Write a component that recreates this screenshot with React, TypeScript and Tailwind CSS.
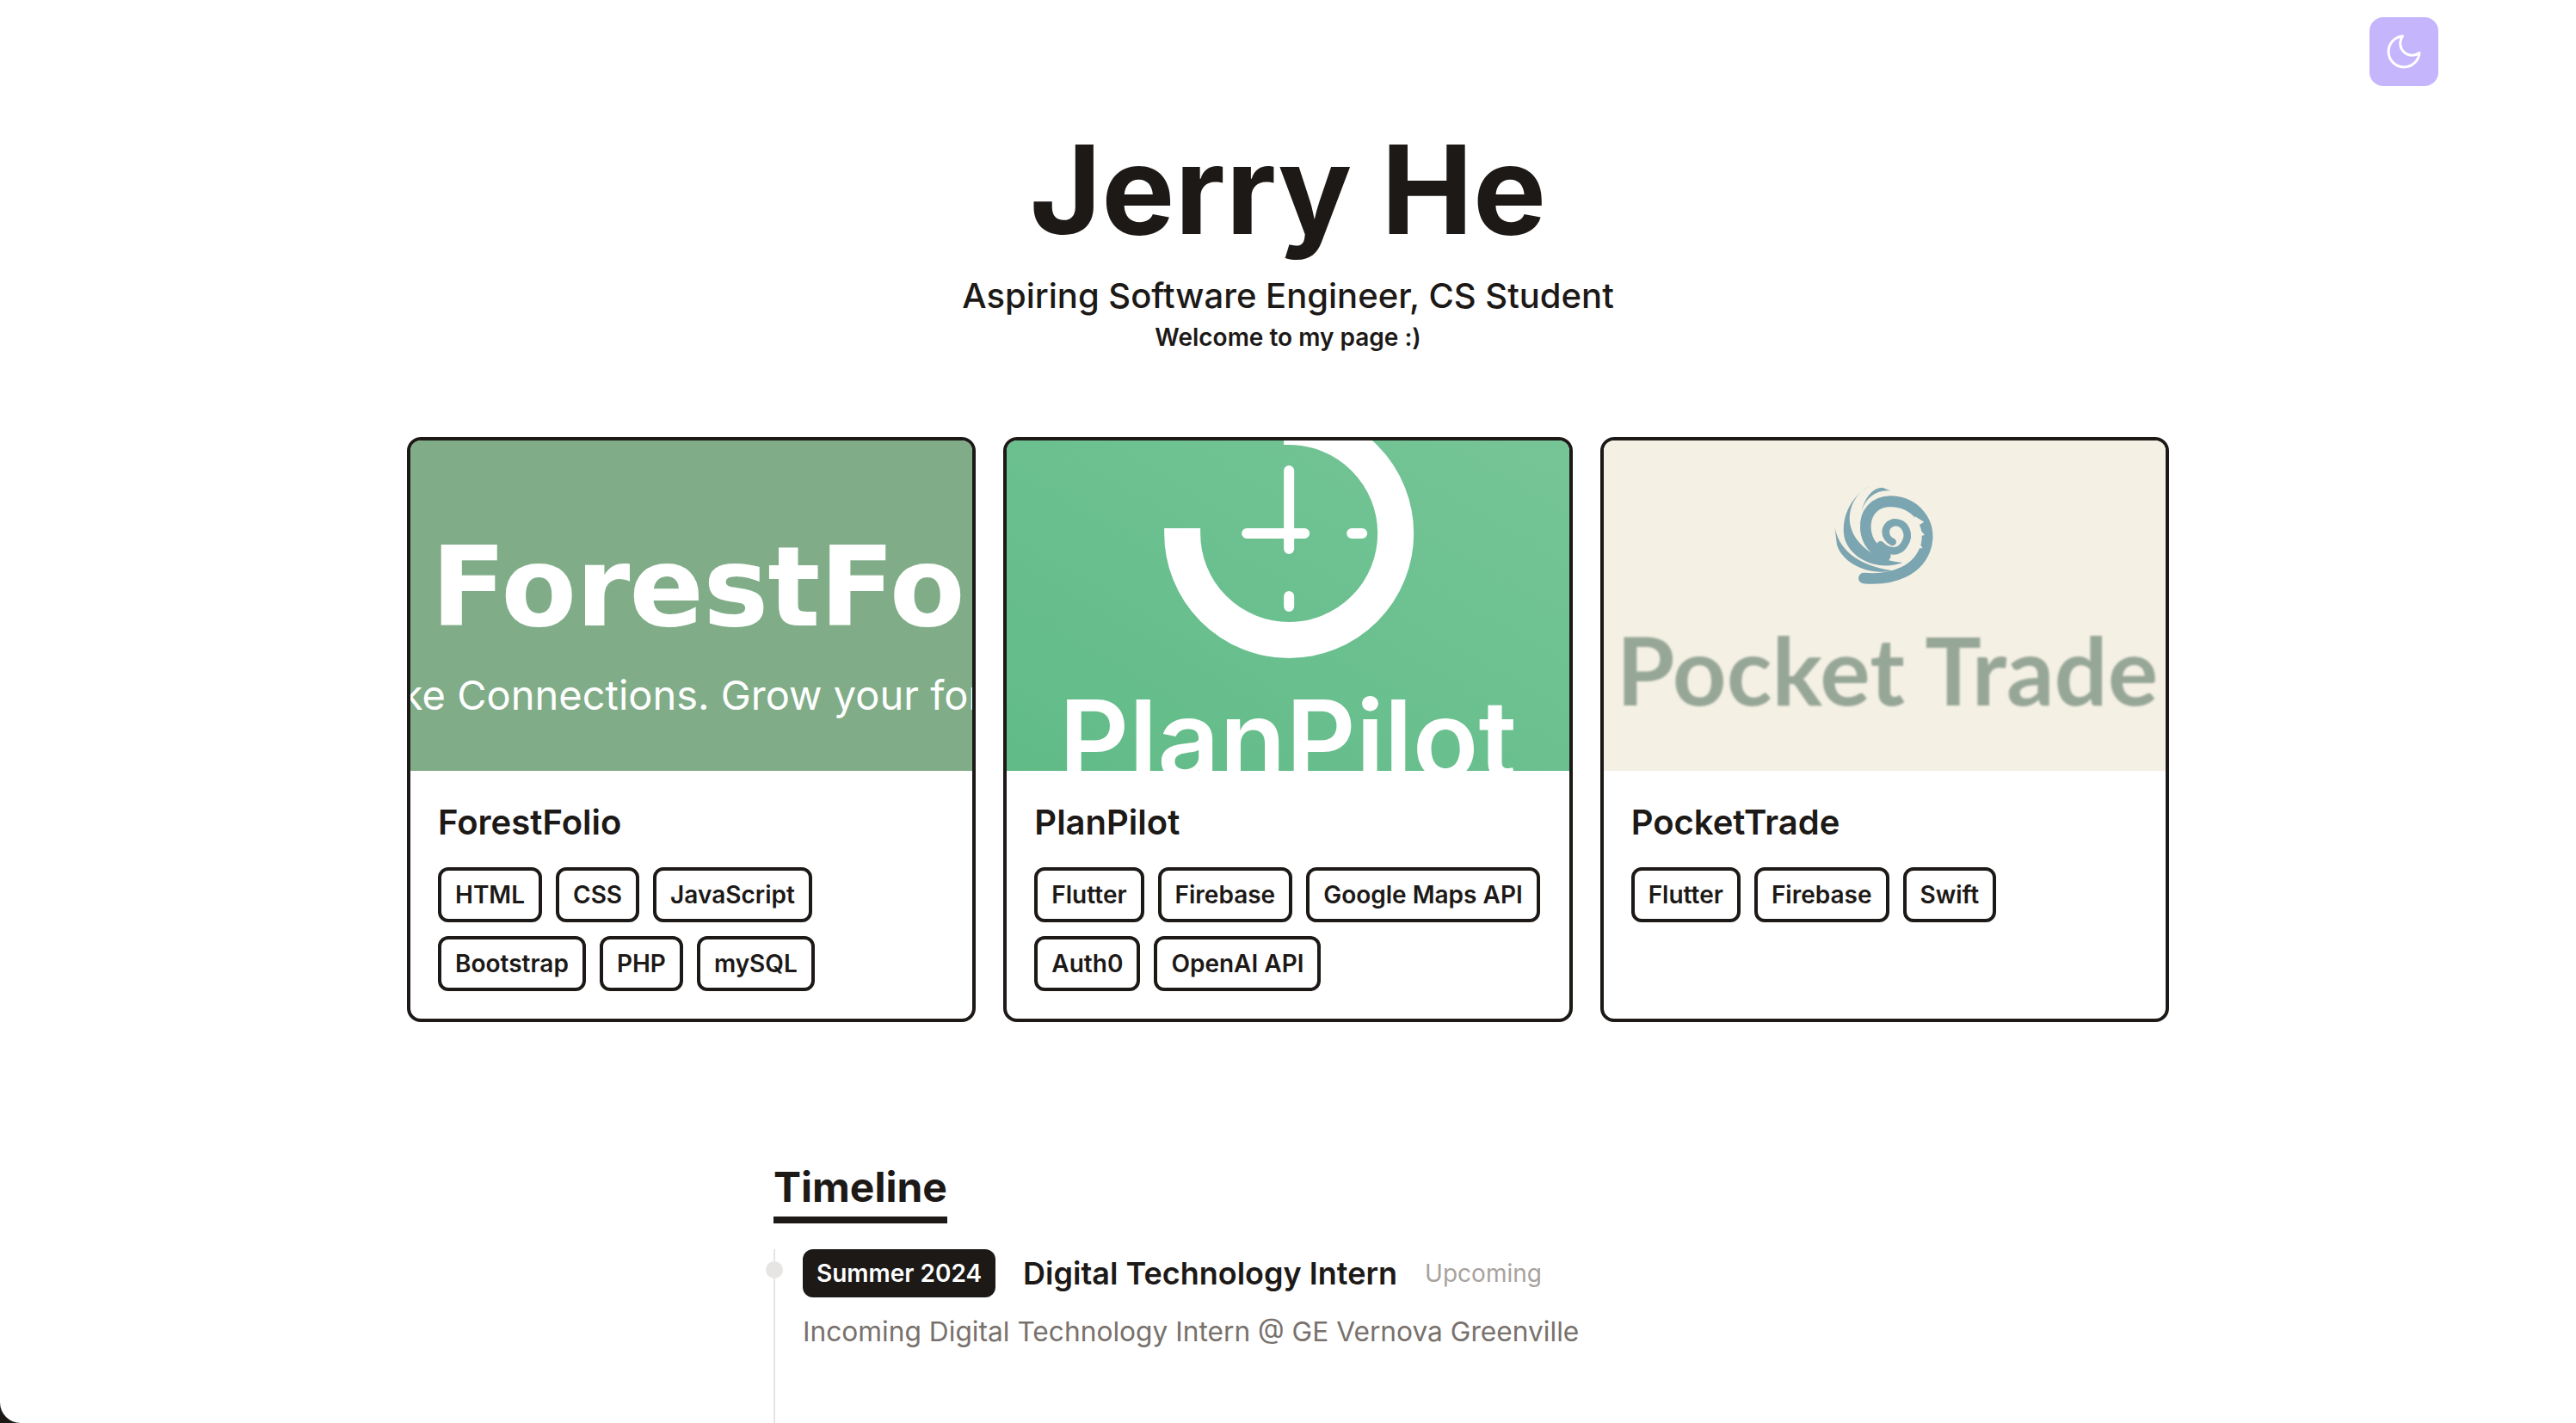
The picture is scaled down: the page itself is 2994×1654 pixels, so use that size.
const tagCls = "rounded-[12px] border-[4px] border-[#1c1917] px-[16px] py-[8px] text-[28px] leading-[40px] font-semibold text-[#1c1917]";

function Tags({ items }: { items: string[] }) {
  return (
    <div className="flex flex-wrap gap-[16px]">
      {items.map((t) => (
        <span key={t} className={tagCls}>{t}</span>
      ))}
    </div>
  );
}

function Card({ title, tags, children }: { title: string; tags: string[]; children: React.ReactNode }) {
  return (
    <div className="h-[680px] overflow-hidden rounded-[16px] border-[4px] border-[#1c1917] bg-white">
      <div className="h-[384px] overflow-hidden">{children}</div>
      <div className="px-[32px] pt-[32px]">
        <h3 className="mb-[24px] text-[40px] leading-[56px] font-semibold text-[#1c1917]">{title}</h3>
        <Tags items={tags} />
      </div>
    </div>
  );
}

function ForestBanner() {
  return (
    <div className="h-full overflow-hidden bg-[#80ad88] text-white">
      <div className="pt-[86px] pl-[24px] text-[128px] leading-[170px] font-bold tracking-[-1px] whitespace-nowrap [font-family:'DejaVu_Sans',sans-serif]">ForestFolio</div>
      <div className="mt-[10px] ml-[-80px] text-[47px] leading-[60px] font-normal whitespace-nowrap">Make Connections. Grow your forest</div>
    </div>
  );
}

function PlanBanner() {
  return (
    <div className="h-full overflow-hidden bg-gradient-to-tr from-[#60bb87] to-[#76c597] text-white">
      <svg viewBox="0 0 653 284" className="block h-[284px] w-full overflow-visible" fill="none" stroke="white" strokeLinecap="round">
        <path d="M204 102 L204 108 A124 124 0 1 0 328 -16 L322 -16" strokeWidth="42" strokeLinecap="butt" />
        <path d="M328 35 V126 M279 108 H346 M401 108 H413 M328 181 V193" strokeWidth="12" />
      </svg>
      <div className="text-center text-[126px] leading-[126px] font-semibold whitespace-nowrap">PlanPilot</div>
    </div>
  );
}

function PocketBanner() {
  return (
    <div className="h-full overflow-hidden bg-[#f4f0e4]">
      <svg viewBox="0 0 653 201" className="block h-[201px] w-full blur-[0.6px]" fill="none">
        <g transform="translate(255.5 38) scale(0.3333)">
          <path d="M140 366 C240 375 335 340 358 250 C375 170 320 102 235 98 C175 98 142 140 146 195 C150 240 178 272 215 288" stroke="#7ba5b0" strokeWidth="38" strokeLinecap="round" />
          <path d="M240 240 C210 226 205 182 245 172 C285 168 305 215 280 250 C262 278 225 278 198 250" stroke="#7ba5b0" strokeWidth="26" strokeLinecap="round" />
          <path d="M158 45 C110 70 78 130 95 190 C112 250 180 305 275 312 C200 340 105 310 75 235 C55 165 90 85 158 45 Z" fill="#7ba5b0" />
          <path d="M38 185 C50 260 110 320 240 340 C150 358 65 312 46 250 Z" fill="#7ba5b0" />
          <path d="M235 62 C190 55 150 80 132 130 C145 85 170 50 205 50 Z" fill="#7ba5b0" />
          <path d="M318 150 L350 170 L325 185 L352 215 L322 225 L345 262 L318 262 Z" fill="#f4f0e4" />
        </g>
      </svg>
      <div className="pl-[15px] text-[109.5px] leading-[130px] font-bold text-[#97a797] whitespace-nowrap blur-[1px] [font-family:Lato,sans-serif]">Pocket Trade</div>
    </div>
  );
}

export default function App() {
  return (
    <div className="h-[1654px] w-full overflow-hidden bg-[#1c1917] [font-family:Inter,sans-serif]">
      <div className="relative flex h-full flex-col items-center rounded-bl-[24px] bg-white pt-[140px]">
        <button className="absolute top-[20px] left-[2754px] flex h-[80px] w-[80px] items-center justify-center rounded-[16px] bg-[#c4b5fd] text-white">
          <svg viewBox="0 0 24 24" className="h-[48px] w-[48px]" fill="none" stroke="currentColor" strokeWidth="1.5" strokeLinecap="round" strokeLinejoin="round">
            <path d="M21 12.79A9 9 0 1 1 11.21 3 7 7 0 0 0 21 12.79z" />
          </svg>
        </button>

        <h1 className="text-[143px] leading-[160px] font-bold text-[#1c1917]">Jerry He</h1>
        <p className="mt-[16px] text-[40px] leading-[56px] font-medium text-[#1c1917]">Aspiring Software Engineer, CS Student</p>
        <p className="mt-[2px] text-[28px] leading-[36px] font-semibold text-[#1c1917]">Welcome to my page :)</p>

        <div className="mt-[98px] grid w-[2048px] grid-cols-3 gap-[32px]">
          <Card title="ForestFolio" tags={["HTML", "CSS", "JavaScript", "Bootstrap", "PHP", "mySQL"]}><ForestBanner /></Card>
          <Card title="PlanPilot" tags={["Flutter", "Firebase", "Google Maps API", "Auth0", "OpenAI API"]}><PlanBanner /></Card>
          <Card title="PocketTrade" tags={["Flutter", "Firebase", "Swift"]}><PocketBanner /></Card>
        </div>

        <div className="mt-[160px] w-[1196px]">
          <h2 className="inline-block border-b-[8px] border-[#1c1917] pb-[2px] text-[48px] leading-[64px] font-bold text-[#1c1917]">Timeline</h2>
          <div className="relative mt-[30px] h-[400px] border-l-[2px] border-[#e7e5e4] pl-[32px]">
            <span className="absolute top-[14px] left-[-11px] h-[20px] w-[20px] rounded-full bg-[#e7e5e4]" />
            <div className="flex items-center">
              <span className="rounded-[12px] bg-[#1c1917] px-[16px] py-[8px] text-[28px] leading-[40px] font-semibold text-white">Summer 2024</span>
              <span className="ml-[32px] text-[36px] leading-[56px] font-semibold text-[#1c1917]">Digital Technology Intern</span>
              <span className="ml-[32px] text-[28px] leading-[40px] text-[#a8a29e]">Upcoming</span>
            </div>
            <p className="mt-[16px] text-[31.7px] leading-[48px] text-[#78716c]">Incoming Digital Technology Intern @ GE Vernova Greenville</p>
          </div>
        </div>
      </div>
    </div>
  );
}
